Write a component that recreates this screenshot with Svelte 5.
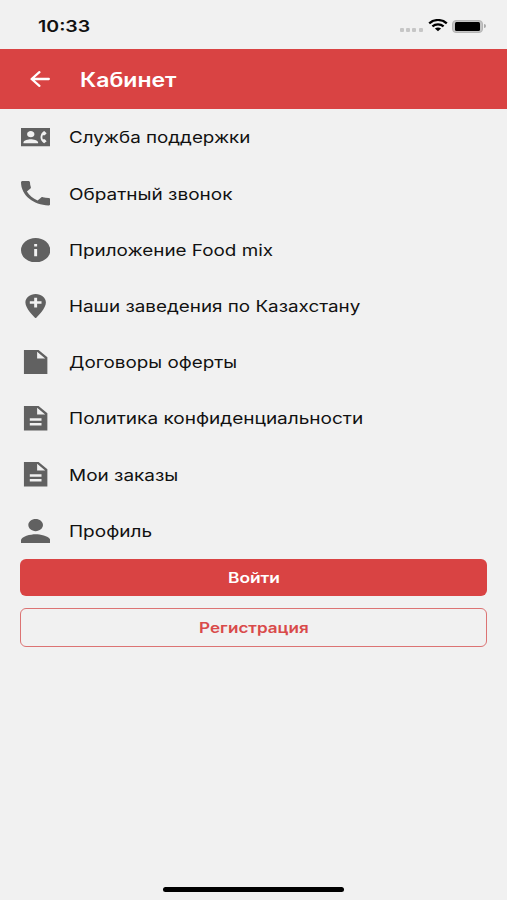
<script>
  const doc = 'M14 2H4v20h16V8zM16 18H8v-2h8zM16 14H8v-2h8zM13 9V3.5L18.5 9z';
  const items = [
    { label: 'Служба поддержки', box: '0 0 24 24', d: 'M24 3H0v18h24zM8 6c1.66 0 3 1.34 3 3s-1.34 3-3 3-3-1.34-3-3 1.34-3 3-3zm6 12H2v-1c0-2 4-3.1 6-3.1s6 1.1 6 3.1v1zm3.85-4h1.64L21 16l-1.99 1.99c-1.31-.98-2.28-2.38-2.73-3.99-.18-.64-.28-1.31-.28-2s.1-1.36.28-2c.45-1.62 1.42-3.01 2.73-3.99L21 8l-1.51 2h-1.64c-.22.63-.35 1.3-.35 2s.13 1.37.35 2z', k: 1.174 },
    { label: 'Обратный звонок', box: '3 3 18 18', d: 'M6.62 10.79c1.44 2.83 3.76 5.14 6.59 6.59l2.2-2.2c.27-.27.67-.36 1.02-.24 1.12.37 2.33.57 3.57.57.55 0 1 .45 1 1V20c0 .55-.45 1-1 1-9.39 0-17-7.61-17-17 0-.55.45-1 1-1h3.5c.55 0 1 .45 1 1 0 1.25.2 2.45.57 3.57.11.35.03.74-.25 1.02z', k: 1.186 },
    { label: 'Приложение Food mix', box: '2 2 20 20', d: 'M12 2a10 10 0 1 0 0 20a10 10 0 0 0 0-20zM13 17h-2v-6h2zM13 9h-2V7h2z', k: 1.178 },
    { label: 'Наши заведения по Казахстану', box: '2 2 20 20', d: 'M12 2C8.14 2 5 5.14 5 9c0 5.25 7 13 7 13s7-7.75 7-13c0-3.86-3.13-7-7-7zm4 8h-3v3h-2v-3H8V8h3V5h2v3h3v2z', k: 1.177 },
    { label: 'Договоры оферты', box: '2 2 20 20', d: 'M14 2H4v20h16V8zM13 9V3.5L18.5 9z', k: 1.176 },
    { label: 'Политика конфиденциальности', box: '2 2 20 20', d: doc, k: 1.188 },
    { label: 'Мои заказы', box: '2 2 20 20', d: doc, k: 1.185 },
    { label: 'Профиль', box: '4 4 16 16', d: 'M12 12c2.21 0 4-1.79 4-4s-1.79-4-4-4-4 1.79-4 4 1.79 4 4 4zm0 2c-2.67 0-8 1.34-8 4v2h16v-2c0-2.66-5.33-4-8-4z', k: 1.187 }
  ];
</script>

<div class="screen">
  <div class="status">
    <span class="time">10:33</span>
    <div class="indicators">
      <div class="dots"><i></i><i></i><i></i><i></i></div>
      <svg class="wifi" viewBox="0 0 20 13" preserveAspectRatio="none">
        <path d="M1.2 4.5C6.2-.1 13.8-.1 18.8 4.5M4.4 7.7C7.6 4.9 12.4 4.9 15.6 7.7" fill="none" stroke="#000" stroke-width="2.3" />
        <path d="M10 12.8L6.9 9.9C8.7 8.4 11.3 8.4 13.1 9.9z" />
      </svg>
      <div class="battery"><div class="charge"></div></div>
      <div class="cap"></div>
    </div>
  </div>

  <header>
    <svg class="back" viewBox="0 0 20 16" preserveAspectRatio="none">
      <path d="M18.8 8H1.8M9.4 1.2L1.6 8L9.4 14.8" fill="none" stroke="#fff" stroke-width="2.3" stroke-linecap="round" stroke-linejoin="round" />
    </svg>
    <h1>Кабинет</h1>
  </header>

  <nav>
    {#each items as item}
      <div class="row">
        <svg class="icon" viewBox={item.box} preserveAspectRatio="none">
          <path fill-rule="evenodd" d={item.d} />
        </svg>
        <span class="label" style="transform: scaleX({item.k})">{item.label}</span>
      </div>
    {/each}
  </nav>

  <div class="actions">
    <button class="login"><span>Войти</span></button>
    <button class="register"><span>Регистрация</span></button>
  </div>

  <div class="home"></div>
</div>

<style>
  :global(body) { background: #f1f1f1; }
  .screen { box-sizing: border-box; width: 507px; height: 900px; display: flex; flex-direction: column; overflow: hidden; background: #f1f1f1; font-family: Inter, "Noto Sans", sans-serif; color: #111; }
  .status { box-sizing: border-box; flex: none; height: 49px; padding: 3px 21px 0 38px; display: flex; align-items: center; justify-content: space-between; }
  .time { font-size: 16px; line-height: 20px; font-weight: 600; transform: scaleX(1.22); transform-origin: left; }
  .indicators { display: flex; align-items: center; }
  .dots { display: flex; gap: 2.3px; margin: 8px 5px 0 0; }
  .dots i { width: 4px; height: 4px; border-radius: 1px; background: #c6c6c6; }
  .wifi { width: 20px; height: 12.5px; margin: -1px 4.5px 0 0; }
  .battery { box-sizing: border-box; width: 31px; height: 13px; padding: 1px 2px; border: 1px solid #b4b4b4; border-radius: 4px; background: #c4c4c4; }
  .charge { height: 9px; border-radius: 1.5px; background: #000; }
  .cap { width: 2px; height: 4px; margin-left: 1px; border-radius: 0 2px 2px 0; background: #aaa; }
  header { box-sizing: border-box; flex: none; height: 60px; padding-left: 30px; display: flex; align-items: center; background: #d94343; }
  .back { width: 20px; height: 16px; }
  h1 { margin: 1px 0 0 29.7px; font-size: 19.5px; line-height: 24px; font-weight: 600; color: #fff; white-space: nowrap; transform: scaleX(1.18); transform-origin: left; }
  nav { padding: 0.3px 20.5px 0.1px; }
  .row { height: 56.2px; display: flex; align-items: center; }
  .icon { flex: none; width: 29.3px; height: 24.4px; fill: #616161; }
  .label { margin-left: 19.7px; font-size: 16px; line-height: 20px; white-space: nowrap; transform-origin: left; }
  .actions { padding: 0 19.6px 0 20.4px; display: flex; flex-direction: column; gap: 12px; }
  button { box-sizing: border-box; width: 100%; margin: 0; padding: 1px 0 0; border: 0; border-radius: 6px; font: 600 14px/18px Inter, "Noto Sans", sans-serif; }
  button span { display: inline-block; transform: scaleX(1.22); }
  .login { height: 37px; color: #fff; background: #d94343; }
  .register { height: 39px; color: #d94a4a; background: transparent; border: 1.5px solid #dc7373; padding-top: 2px; }
  .login span { transform: scaleX(1.24); }
  .home { width: 181px; height: 5px; margin: auto auto 8px 163px; border-radius: 3px; background: #000; }
</style>
